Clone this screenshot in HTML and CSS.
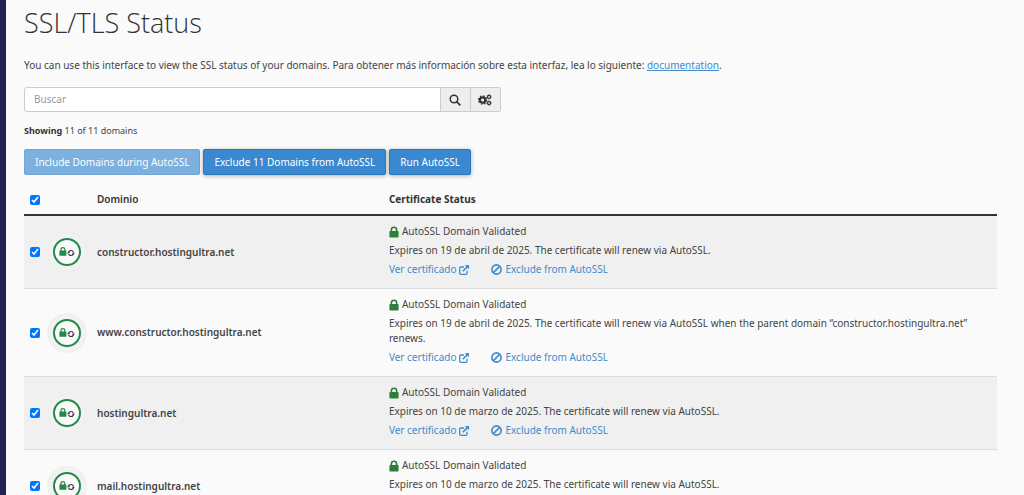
FILE: index.html
```html
<!DOCTYPE html>
<html lang="es">
<head>
    <meta charset="UTF-8">
    <title>SSL/TLS Status</title>
    <link rel="stylesheet" href="styles.css">
</head>
<body>

<!-- Shared icons -->
<svg class="sprite" aria-hidden="true">
    <symbol id="icon-search" viewBox="0 0 12 12">
        <circle cx="5" cy="5" r="3.8" fill="none" stroke="currentColor" stroke-width="1.5"/>
        <path d="M7.8 7.8L10.8 10.8" stroke="currentColor" stroke-width="1.8" stroke-linecap="round"/>
    </symbol>
    <symbol id="icon-cogs" viewBox="0 0 14 12">
        <circle cx="4.6" cy="6" r="2.7" fill="none" stroke="currentColor" stroke-width="2.2"/>
        <circle cx="4.6" cy="6" r="4.1" fill="none" stroke="currentColor" stroke-width="1.2" stroke-dasharray="1.7 1.52"/>
        <circle cx="11" cy="2.9" r="1.5" fill="none" stroke="currentColor" stroke-width="1.2"/>
        <circle cx="11" cy="2.9" r="2.3" fill="none" stroke="currentColor" stroke-width=".7" stroke-dasharray="1 .8"/>
        <circle cx="11" cy="9.1" r="1.5" fill="none" stroke="currentColor" stroke-width="1.2"/>
        <circle cx="11" cy="9.1" r="2.3" fill="none" stroke="currentColor" stroke-width=".7" stroke-dasharray="1 .8"/>
    </symbol>
    <symbol id="icon-lock" viewBox="0 0 10 12">
        <path d="M2.4 6V3.8a2.6 2.6 0 0 1 5.2 0V6" fill="none" stroke="currentColor" stroke-width="1.6"/>
        <rect x=".4" y="5" width="9.2" height="6.6" rx=".8" fill="currentColor"/>
    </symbol>
    <symbol id="icon-external" viewBox="0 0 10 10">
        <path d="M5 2H1.7a1 1 0 0 0-1 1v5.3a1 1 0 0 0 1 1H7a1 1 0 0 0 1-1V5.8" fill="none" stroke="currentColor" stroke-width="1.3"/>
        <path d="M3.8 6.2L8.4 1.6" stroke="currentColor" stroke-width="1.6"/>
        <path d="M5.8 0H10v4.2z" fill="currentColor"/>
    </symbol>
    <symbol id="icon-ban" viewBox="0 0 10 10">
        <circle cx="5" cy="5" r="4.2" fill="none" stroke="currentColor" stroke-width="1.5"/>
        <path d="M2.2 7.8L7.8 2.2" stroke="currentColor" stroke-width="1.5"/>
    </symbol>
    <symbol id="icon-status" viewBox="0 0 40 40">
        <circle cx="20" cy="20" r="19" fill="#f3f3f3" stroke="#eee" stroke-width="1.6"/>
        <circle cx="20" cy="20" r="16" fill="none" stroke="#f0f0f0" stroke-width="1"/>
        <circle cx="20" cy="20" r="13" fill="#fafafa" stroke="#22894a" stroke-width="2"/>
        <path d="M14 19v-1.4a1.9 1.9 0 0 1 3.8 0V19" fill="none" stroke="#22894a" stroke-width="1.2"/>
        <rect x="12.4" y="18.6" width="7" height="5.2" rx=".5" fill="#22894a"/>
        <circle cx="24" cy="21" r="2.5" fill="none" stroke="#333" stroke-width="1.2" stroke-dasharray="6.7 1.15"/>
        <path d="M20.2 21.4l1.1-2 1.8 1.6zM27.8 20.6l-1.1 2-1.8-1.6z" fill="#333"/>
    </symbol>
</svg>

<main class="content">
    <h1>SSL/TLS Status</h1>
    <p class="intro">You can use this interface to view the SSL status of your domains. Para obtener más información sobre esta interfaz, lea lo siguiente: <a href="#documentation">documentation</a>.</p>

    <form class="search">
        <input type="text" class="search-input" placeholder="Buscar" aria-label="Buscar">
        <button type="button" class="search-btn" aria-label="Buscar"><svg width="12" height="12"><use href="#icon-search"/></svg></button>
        <button type="button" class="search-btn" aria-label="Opciones"><svg width="14" height="12"><use href="#icon-cogs"/></svg></button>
    </form>

    <p class="showing"><strong>Showing</strong> 11 of 11 domains</p>

    <div class="actions">
        <button type="button" class="btn" disabled>Include Domains during AutoSSL</button>
        <button type="button" class="btn">Exclude 11 Domains from AutoSSL</button>
        <button type="button" class="btn">Run AutoSSL</button>
    </div>

    <table class="domains">
        <thead>
            <tr>
                <th class="check"><input type="checkbox" aria-label="Todos" checked></th>
                <th class="icon"></th>
                <th class="domain">Dominio</th>
                <th class="status">Certificate Status</th>
            </tr>
        </thead>
        <tbody>
            <tr>
                <td class="check"><input type="checkbox" id="d1" checked></td>
                <td class="icon"><svg width="40" height="40"><use href="#icon-status"/></svg></td>
                <td class="domain"><label for="d1">constructor.hostingultra.net</label></td>
                <td class="status">
                    <p><svg class="lock" width="10" height="12"><use href="#icon-lock"/></svg>AutoSSL Domain Validated</p>
                    <p>Expires on 19 de abril de 2025. The certificate will renew via AutoSSL.</p>
                    <div class="links">
                        <a href="#cert">Ver certificado<svg width="10" height="10"><use href="#icon-external"/></svg></a>
                        <a href="#exclude"><svg width="11" height="11"><use href="#icon-ban"/></svg>Exclude from AutoSSL</a>
                    </div>
                </td>
            </tr>
            <tr>
                <td class="check"><input type="checkbox" id="d2" checked></td>
                <td class="icon"><svg width="40" height="40"><use href="#icon-status"/></svg></td>
                <td class="domain"><label for="d2">www.constructor.hostingultra.net</label></td>
                <td class="status">
                    <p><svg class="lock" width="10" height="12"><use href="#icon-lock"/></svg>AutoSSL Domain Validated</p>
                    <p>Expires on 19 de abril de 2025. The certificate will renew via AutoSSL when the parent domain “constructor.hostingultra.net” renews.</p>
                    <div class="links">
                        <a href="#cert">Ver certificado<svg width="10" height="10"><use href="#icon-external"/></svg></a>
                        <a href="#exclude"><svg width="11" height="11"><use href="#icon-ban"/></svg>Exclude from AutoSSL</a>
                    </div>
                </td>
            </tr>
            <tr>
                <td class="check"><input type="checkbox" id="d3" checked></td>
                <td class="icon"><svg width="40" height="40"><use href="#icon-status"/></svg></td>
                <td class="domain"><label for="d3">hostingultra.net</label></td>
                <td class="status">
                    <p><svg class="lock" width="10" height="12"><use href="#icon-lock"/></svg>AutoSSL Domain Validated</p>
                    <p>Expires on 10 de marzo de 2025. The certificate will renew via AutoSSL.</p>
                    <div class="links">
                        <a href="#cert">Ver certificado<svg width="10" height="10"><use href="#icon-external"/></svg></a>
                        <a href="#exclude"><svg width="11" height="11"><use href="#icon-ban"/></svg>Exclude from AutoSSL</a>
                    </div>
                </td>
            </tr>
            <tr>
                <td class="check"><input type="checkbox" id="d4" checked></td>
                <td class="icon"><svg width="40" height="40"><use href="#icon-status"/></svg></td>
                <td class="domain"><label for="d4">mail.hostingultra.net</label></td>
                <td class="status">
                    <p><svg class="lock" width="10" height="12"><use href="#icon-lock"/></svg>AutoSSL Domain Validated</p>
                    <p>Expires on 10 de marzo de 2025. The certificate will renew via AutoSSL.</p>
                    <div class="links">
                        <a href="#cert">Ver certificado<svg width="10" height="10"><use href="#icon-external"/></svg></a>
                        <a href="#exclude"><svg width="11" height="11"><use href="#icon-ban"/></svg>Exclude from AutoSSL</a>
                    </div>
                </td>
            </tr>
        </tbody>
    </table>
</main>

</body>
</html>
```

FILE: styles.css
```css
* {
    box-sizing: border-box;
}
html {
    scrollbar-width: none;
}
body {
    margin: 0;
    min-height: 100vh;
    border-left: 6px solid #1f2653; /* Edge of the sidebar */
    background: #fafafa;
    color: #444;
    font-family: "Noto Sans", "Open Sans", sans-serif;
    font-size: 10px;
    line-height: 15px;
}
.sprite {
    display: none;
}
.content {
    padding: 4px 27px 0 18px;
}
h1 {
    margin: 0;
    font-family: "Open Sans", sans-serif;
    font-size: 27px;
    line-height: 37px;
    font-weight: 300;
    color: #333;
}
p {
    margin: 0;
}
a {
    color: #428bca;
}
.intro {
    margin-top: 17px;
}

/* Search box */
.search {
    display: flex;
    width: 49%;
    height: 25px;
    margin-top: 14px;
}
.search-input {
    flex: 1;
    min-width: 0;
    padding: 0 9px;
    border: 1px solid #ccc;
    border-radius: 3px 0 0 3px;
    background: #fff;
    font: inherit;
}
.search-input::placeholder {
    color: #999;
}
.search-btn {
    display: flex;
    align-items: center;
    justify-content: center;
    width: 31px;
    margin-left: -1px;
    padding: 0;
    border: 1px solid #ccc;
    background: #eee;
    color: #333;
}
.search-btn:last-child {
    border-radius: 0 2px 2px 0;
}
.showing {
    margin-top: 11px;
    font-size: 9px;
}
.showing strong {
    color: #333;
}

/* Action buttons */
.actions {
    display: flex;
    gap: 3px;
    margin-top: 11px;
}
.btn {
    height: 26px;
    padding: 0 10px;
    border: 1px solid #2d78bd;
    border-radius: 2px;
    background: #3a89d0;
    color: #fff;
    font: inherit;
    box-shadow: 0 1px 4px rgba(0, 0, 0, 0.3);
}
.btn:disabled {
    opacity: 0.65;
    box-shadow: none;
}

/* Domain table */
.domains {
    width: 100%;
    margin-top: 10px;
    border-collapse: collapse;
    table-layout: fixed;
}
.domains th {
    height: 30px;
    padding: 0;
    border-bottom: 2px solid #333;
    text-align: left;
    color: #333;
}
.domains td {
    padding: 0;
    border-bottom: 1px solid #ddd;
}
.domains tbody tr:nth-child(odd) {
    background: #f0f0f0;
}
.domains .check {
    width: 23px;
    padding-left: 6px;
}
.domains .icon {
    width: 50px;
}
.domains .domain {
    width: 30%;
    font-weight: 600;
}
.domains td.status {
    padding: 8px 12px 11px 0;
}
.check input {
    display: block;
    width: 10px;
    height: 10px;
    margin: 0;
}
.icon svg {
    display: block;
}
.status p {
    margin-bottom: 4px;
}
.lock {
    margin-right: 3px;
    color: #2f7d3b;
    vertical-align: -3px;
}
.links {
    display: flex;
    gap: 22px;
}
.links a {
    display: flex;
    align-items: center;
    gap: 3px;
    text-decoration: none;
}
```
